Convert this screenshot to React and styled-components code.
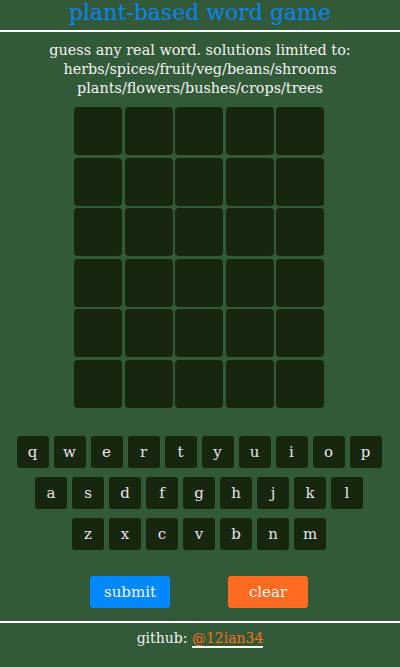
import React from 'react';
import styled, { createGlobalStyle } from 'styled-components';

const GlobalStyle = createGlobalStyle`
    body {
        margin: 0;
        background: #335a38;
        font-family: "DejaVu Serif", "Liberation Serif", serif;
        color: #f0f0f0;
    }
`;

const ROWS = ['qwertyuiop', 'asdfghjkl', 'zxcvbnm'];

const App = () => (
    <Page>
        <GlobalStyle />
        <Title>plant-based word game</Title>
        <Intro>
            guess any real word. solutions limited to:<br />
            herbs/spices/fruit/veg/beans/shrooms<br />
            plants/flowers/bushes/crops/trees
        </Intro>
        <Board>
            {Array.from({ length: 30 }).map((_, i) => <Tile key={i} />)}
        </Board>
        <Keyboard>
            {ROWS.map(row => (
                <KeyRow key={row}>
                    {row.split('').map(k => <Key key={k}>{k}</Key>)}
                </KeyRow>
            ))}
        </Keyboard>
        <Actions>
            <ActionButton color="#0088ff">submit</ActionButton>
            <ActionButton color="#ff6c1f">clear</ActionButton>
        </Actions>
        <Footer>
            github: <Link href="#">@12ian34</Link>
        </Footer>
    </Page>
);

const Page = styled.div`
    width: 400px;
    min-height: 667px;
    display: flex;
    flex-direction: column;
    align-items: center;
`;

const Title = styled.h1`
    margin: 0;
    width: 100%;
    height: 30px;
    line-height: 26px;
    font-size: 22px;
    font-weight: normal;
    text-align: center;
    color: #0a84f0;
    border-bottom: 2px solid #ffffff;
`;

const Intro = styled.div`
    margin-top: 9px;
    font-size: 14.4px;
    line-height: 19px;
    text-align: center;
    color: #f2f2f2;
`;

const Board = styled.div`
    margin-top: 9px;
    margin-right: 2px;
    width: 250px;
    display: grid;
    grid-template-columns: repeat(5, 48px);
    grid-auto-rows: 48px;
    gap: 2.5px;
`;

const Tile = styled.div`
    background: #17260f;
    border-radius: 4px;
`;

const Keyboard = styled.div`
    margin-top: 28px;
    margin-right: 2px;
    display: flex;
    flex-direction: column;
    align-items: center;
    gap: 9px;
`;

const KeyRow = styled.div`
    display: flex;
    gap: 5px;
`;

const Key = styled.div`
    width: 32px;
    height: 32px;
    display: flex;
    align-items: center;
    justify-content: center;
    background: #17260f;
    border-radius: 3px;
    font-size: 15px;
    color: #e6e6e6;
`;

const Actions = styled.div`
    margin-top: 26px;
    margin-right: 2px;
    display: flex;
    gap: 58px;
`;

const ActionButton = styled.button`
    width: 80px;
    height: 32px;
    border: none;
    border-radius: 3px;
    background: ${p => p.color};
    color: #f4f4f4;
    font-family: inherit;
    font-size: 15px;
    padding: 0;
`;

const Footer = styled.div`
    margin-top: 13px;
    width: 100%;
    border-top: 2px solid #ffffff;
    padding-top: 5px;
    text-align: center;
    font-size: 14px;
    line-height: 20px;
    color: #f0f0f0;
`;

const Link = styled.a`
    color: #ff6c1f;
    text-decoration: none;
    border-bottom: 2px solid #ffffff;
`;

export default App;
